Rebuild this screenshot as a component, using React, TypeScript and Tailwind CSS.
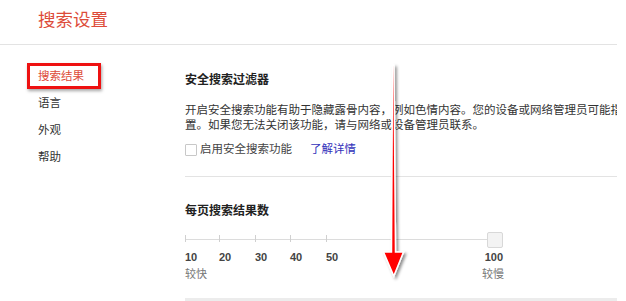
import React from "react";

export default function App() {
  return (
    <div className="relative w-[626px] h-[301px] overflow-hidden bg-white text-[#333] [font-family:'Liberation_Sans','Noto_Sans_CJK_SC',sans-serif]">
      <div className="w-[617px] h-full overflow-hidden">
        <div className="h-[45px] border-b border-[#e3e3e3] pl-[38px] pt-[9px]">
          <span className="text-[17.5px] leading-[22px] text-[#dd4b39]">搜索设置</span>
        </div>
        <div className="flex">
          <div className="w-[185px] shrink-0 pt-[18px] text-[11.5px]">
            <div className="relative h-[27px] leading-[27px] pl-[38px] text-[#dd4b39]">
              搜索结果
              <div className="absolute left-[27px] top-[0px] w-[74px] h-[26px] border-[3px] border-[#ee1111] shadow-[1px_2px_3px_rgba(0,0,0,0.35)]" />
            </div>
            <div className="h-[27px] leading-[27px] pl-[38px]">语言</div>
            <div className="h-[27px] leading-[27px] pl-[38px]">外观</div>
            <div className="h-[27px] leading-[27px] pl-[38px]">帮助</div>
          </div>
          <div className="flex-1 min-w-0">
            <div className="pt-[27px] text-[12px] leading-[16px] font-bold text-[#222] whitespace-nowrap">安全搜索过滤器</div>
            <div className="mt-[15px] text-[11.5px] leading-[14.5px] whitespace-nowrap">
              <div>开启安全搜索功能有助于隐藏露骨内容，例如色情内容。您的设备或网络管理员可能指定了此设</div>
              <div>置。如果您无法关闭该功能，请与网络或设备管理员联系。</div>
            </div>
            <div className="mt-[10px] flex items-center h-[16px] text-[11.5px] whitespace-nowrap">
              <span className="w-[12px] h-[12px] border border-[#c8c8c8] rounded-[1px] bg-white" />
              <span className="ml-[3px] text-[#444]">启用安全搜索功能</span>
              <span className="ml-[18px] text-[#3333bb]">了解详情</span>
            </div>
            <div className="mt-[18px] border-t border-[#e3e3e3]" />
            <div className="mt-[26px] text-[12px] leading-[16px] font-bold text-[#222] whitespace-nowrap">每页搜索结果数</div>
            <div className="relative mt-[13px] w-[318px] h-[16px]">
              <div className="absolute left-0 right-[8px] top-[7px] h-px bg-[#dcdcdc]" />
              <div className="absolute left-0 top-[3px] w-px h-[7px] bg-[#d0d0d0]" />
              <div className="absolute left-[34px] top-[3px] w-px h-[7px] bg-[#d0d0d0]" />
              <div className="absolute left-[70px] top-[3px] w-px h-[7px] bg-[#d0d0d0]" />
              <div className="absolute left-[105px] top-[3px] w-px h-[7px] bg-[#d0d0d0]" />
              <div className="absolute left-[141px] top-[3px] w-px h-[7px] bg-[#d0d0d0]" />
              <div className="absolute right-0 top-0 w-[16px] h-[16px] rounded-[2px] border border-[#d8d8d8] bg-[#f3f3f3]" />
            </div>
            <div className="mt-[3px] flex w-[318px] text-[11px] leading-[12px] font-bold text-[#444]">
              <span className="w-[34px]">10</span>
              <span className="w-[36px]">20</span>
              <span className="w-[35px]">30</span>
              <span className="w-[36px]">40</span>
              <span className="flex-1">50</span>
              <span>100</span>
            </div>
            <div className="mt-[4px] flex w-[318px] text-[11px] leading-[14px] text-[#777]">
              <span className="flex-1">较快</span>
              <span className="-mr-[1px]">较慢</span>
            </div>
            <div className="mt-[17px] h-[3px] bg-[#ececec]" />
          </div>
        </div>
      </div>
      <svg className="absolute left-[370px] top-[55px]" width="50" height="230" viewBox="0 0 50 230">
        <defs>
          <filter id="sh" x="-50%" y="-10%" width="200%" height="130%">
            <feDropShadow dx="2" dy="2" stdDeviation="1.6" floodColor="#000" floodOpacity="0.45" />
          </filter>
        </defs>
        <polygon
          points="22.5,10 24,10 25.5,197 33.5,197 23.8,221 13.5,197 21.5,197"
          fill="#ff0000"
          stroke="#ffffff"
          strokeWidth="1.5"
          strokeLinejoin="miter"
          filter="url(#sh)"
        />
      </svg>
    </div>
  );
}
